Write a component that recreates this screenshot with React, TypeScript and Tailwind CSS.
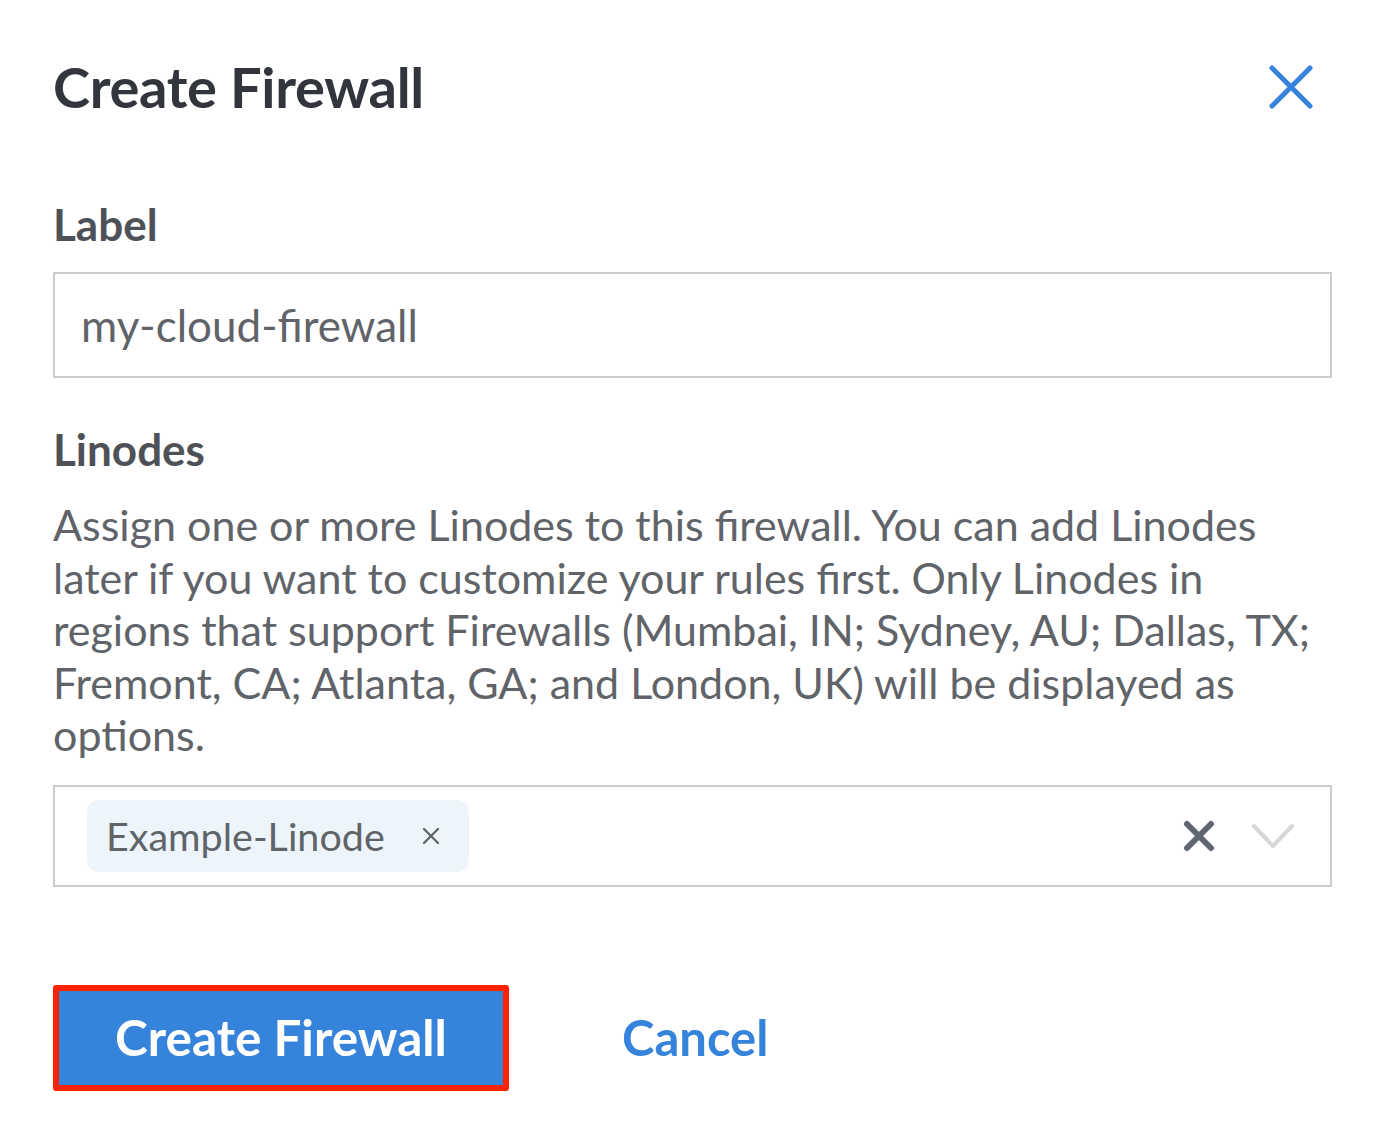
import { X } from "lucide-react";

export default function App() {
  return (
    <div className="min-h-screen bg-white font-['Lato','Liberation_Sans',sans-serif] pl-[53px] pr-[56px] pt-[52px] pb-10">
      <div className="flex items-center justify-between h-[70px]">
        <h1 className="text-[56px] leading-[70px] font-bold text-[#32363c] tracking-[-0.3px]">Create Firewall</h1>
        <button className="mr-[19px] text-[#3683dc]" aria-label="Close">
          <svg width="44" height="44" viewBox="0 0 44 44" fill="none" stroke="currentColor" strokeWidth="5" strokeLinecap="round">
            <path d="M3 3 L41 41 M41 3 L3 41" />
          </svg>
        </button>
      </div>

      <label className="block mt-[77px] text-[44px] leading-[50px] font-bold text-[#4e5156]">Label</label>
      <div className="mt-[23px] h-[106px] border-2 border-[#cccccc] flex items-center px-[26px]">
        <span className="text-[44px] text-[#606469]">my-cloud-firewall</span>
      </div>

      <div className="mt-[46px] text-[44px] leading-[50px] font-bold text-[#4e5156]">Linodes</div>
      <p className="mt-[25px] text-[43px] leading-[52.5px] text-[#606469]">
        Assign one or more Linodes to this firewall. You can add Linodes later if you want to customize your rules
        first. Only Linodes in regions that support Firewalls (Mumbai, IN; Sydney, AU; Dallas, TX; Fremont, CA;
        Atlanta, GA; and London, UK) will be displayed as options.
      </p>

      <div className="mt-[23px] h-[102px] border-2 border-[#cccccc] flex items-center pl-[32px] pr-[35px]">
        <div className="flex items-center h-[72px] bg-[#eef4fc] rounded-[12px] pl-[19px] pr-[24px]">
          <span className="text-[39.5px] text-[#606469]">Example-Linode</span>
          <X className="ml-[32px] text-[#606469]" size={28} strokeWidth={2} />
        </div>
        <div className="flex-1" />
        <svg width="32" height="32" viewBox="0 0 32 32" className="text-[#5f6672]" stroke="currentColor" strokeWidth="6" strokeLinecap="round">
          <path d="M4 4 L28 28 M28 4 L4 28" />
        </svg>
        <svg width="44" height="28" viewBox="0 0 44 28" className="ml-[36px] text-[#d6d7d9]" fill="none" stroke="currentColor" strokeWidth="4" strokeLinecap="round" strokeLinejoin="round">
          <path d="M3 4 L22 24 L41 4" />
        </svg>
      </div>

      <div className="mt-[98px] flex items-center">
        <div className="border-[6px] border-[#ff2200] rounded-[3px]">
          <button className="w-[444px] h-[94px] bg-[#3683dc] text-white text-[49.5px] font-bold flex items-center justify-center">
            Create Firewall
          </button>
        </div>
        <button className="ml-[113px] text-[#3683dc] text-[49px] font-bold">Cancel</button>
      </div>
    </div>
  );
}
